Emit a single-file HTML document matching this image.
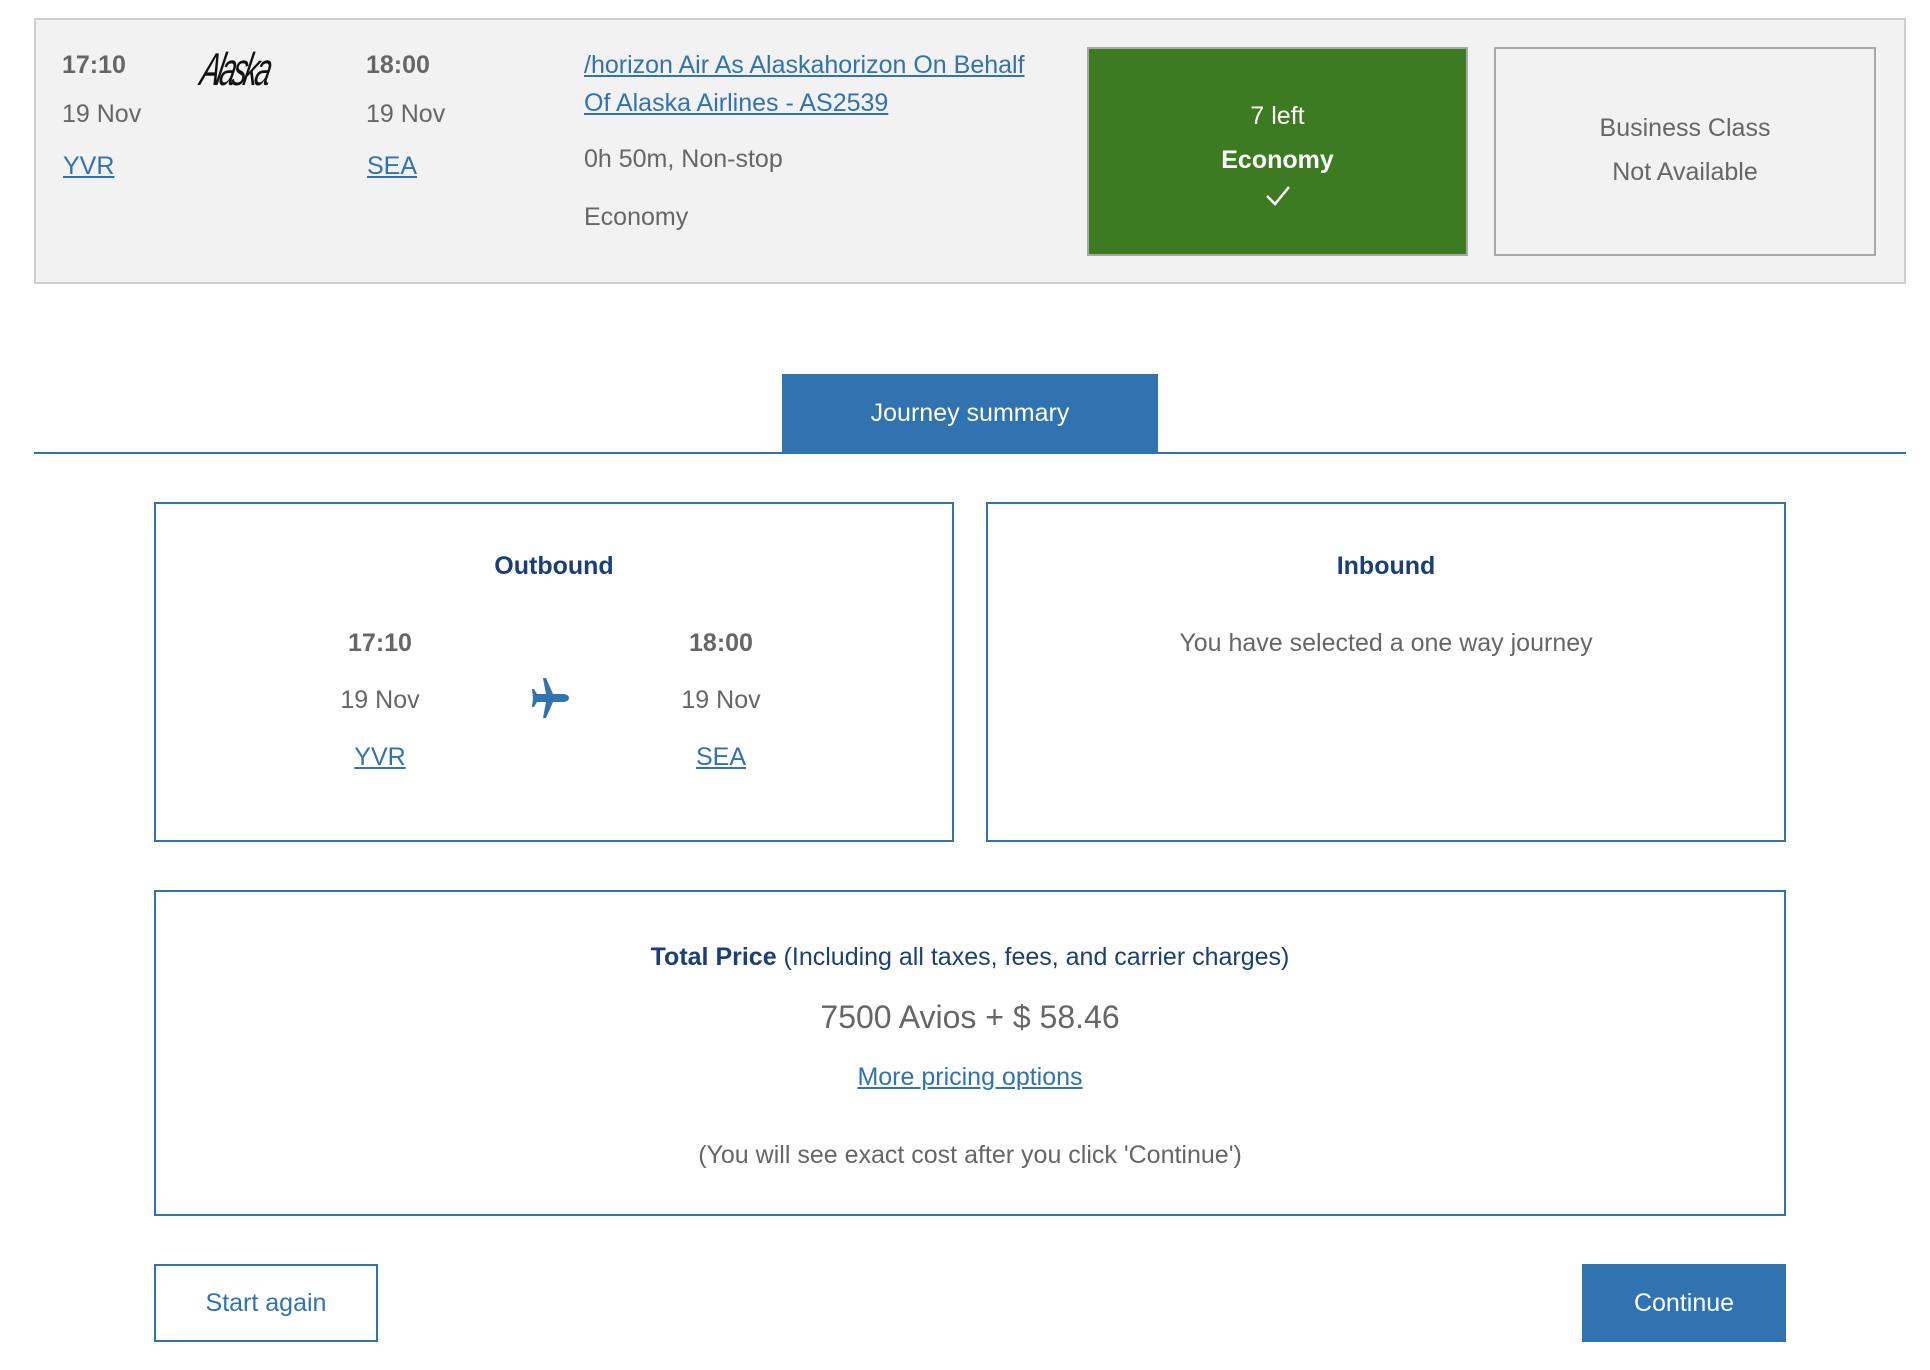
<!DOCTYPE html>
<html><head><meta charset="utf-8"><style>
*{margin:0;padding:0;box-sizing:border-box}
body{width:1930px;height:1370px;background:#fff;font-family:"Liberation Sans",Arial,sans-serif;color:#666;font-size:25px;position:relative;overflow:hidden}
.a{position:absolute;white-space:nowrap;line-height:1}
.c{transform:translateX(-50%)}
a{color:#3172b0;text-decoration:underline}
b{font-weight:bold}
.box{position:absolute;border:2px solid #3172b0}
.t{color:#1a3e78;font-weight:bold}
</style></head><body>
<div style="position:absolute;left:34px;top:18px;width:1872px;height:266px;background:#f2f2f2;border:2px solid #cfcfcf"></div>
<div class="a" style="left:62px;top:53px;font-weight:bold">17:10</div>
<div class="a" style="left:62px;top:102px">19 Nov</div>
<div class="a" style="left:63px;top:154px"><a>YVR</a></div>
<div class="a" style="left:202px;top:46px;font-family:'Liberation Sans',sans-serif;font-style:italic;font-size:46px;color:#111;letter-spacing:-5px;transform:skewX(-12deg) scaleX(0.62);transform-origin:left">Alaska</div>
<div class="a" style="left:366px;top:53px;font-weight:bold">18:00</div>
<div class="a" style="left:366px;top:102px">19 Nov</div>
<div class="a" style="left:367px;top:154px"><a>SEA</a></div>
<div class="a" style="left:584px;top:53px"><a>/horizon Air As Alaskahorizon On Behalf</a></div>
<div class="a" style="left:584px;top:91px"><a>Of Alaska Airlines - AS2539</a></div>
<div class="a" style="left:584px;top:147px">0h 50m, Non-stop</div>
<div class="a" style="left:584px;top:205px">Economy</div>
<div style="position:absolute;left:1087px;top:47px;width:381px;height:209px;background:#3c7b22;border:2px solid #a8a8a8;color:#fff;text-align:center">
<div class="a" style="left:0;right:0;top:55px">7 left</div>
<div class="a" style="left:0;right:0;top:99px;font-weight:bold">Economy</div>
<svg style="position:absolute;left:176px;top:136px" width="26" height="22" viewBox="0 0 26 22"><path d="M2 11 L10 19 L24 2" fill="none" stroke="#fff" stroke-width="2.5"/></svg>
</div>
<div style="position:absolute;left:1494px;top:47px;width:382px;height:209px;border:2px solid #a8a8a8;text-align:center">
<div class="a" style="left:0;right:0;top:67px">Business Class</div>
<div class="a" style="left:0;right:0;top:111px">Not Available</div>
</div>
<div style="position:absolute;left:782px;top:374px;width:376px;height:80px;background:#3172b0;color:#fff;text-align:center;line-height:78px">Journey summary</div>
<div style="position:absolute;left:34px;top:452px;width:1872px;height:2px;background:#3172b0"></div>

<div class="box" style="left:154px;top:502px;width:800px;height:340px"></div>
<div class="a c t" style="left:554px;top:554px">Outbound</div>
<div class="a c" style="left:380px;top:631px;font-weight:bold">17:10</div>
<div class="a c" style="left:380px;top:688px">19 Nov</div>
<div class="a c" style="left:380px;top:745px"><a>YVR</a></div>
<div class="a c" style="left:721px;top:631px;font-weight:bold">18:00</div>
<div class="a c" style="left:721px;top:688px">19 Nov</div>
<div class="a c" style="left:721px;top:745px"><a>SEA</a></div>
<svg style="position:absolute;left:531px;top:677px" width="38" height="42" viewBox="0 0 38 42"><path fill="#3172b0" d="M12 1 L15 1 L22 17 L33 17 Q38 18 38 21 Q38 24 33 25 L22 25 L15 41 L12 41 L15 25 L6 25 L3 30 L1 30 L2 21 L1 12 L3 12 L6 17 L15 17 Z"/></svg>

<div class="box" style="left:986px;top:502px;width:800px;height:340px"></div>
<div class="a c t" style="left:1386px;top:554px">Inbound</div>
<div class="a c" style="left:1386px;top:631px">You have selected a one way journey</div>

<div class="box" style="left:154px;top:890px;width:1632px;height:326px"></div>
<div class="a c" style="left:970px;top:945px;color:#1a3e78"><b>Total Price</b> (Including all taxes, fees, and carrier charges)</div>
<div class="a c" style="left:970px;top:1001px;font-size:32px">7500 Avios + $ 58.46</div>
<div class="a c" style="left:970px;top:1065px"><a>More pricing options</a></div>
<div class="a c" style="left:970px;top:1143px">(You will see exact cost after you click 'Continue')</div>

<div style="position:absolute;left:154px;top:1264px;width:224px;height:78px;border:2px solid #3172b0;color:#3172b0;text-align:center;line-height:74px">Start again</div>
<div style="position:absolute;left:1582px;top:1264px;width:204px;height:78px;background:#3172b0;color:#fff;text-align:center;line-height:78px">Continue</div>
</body></html>
